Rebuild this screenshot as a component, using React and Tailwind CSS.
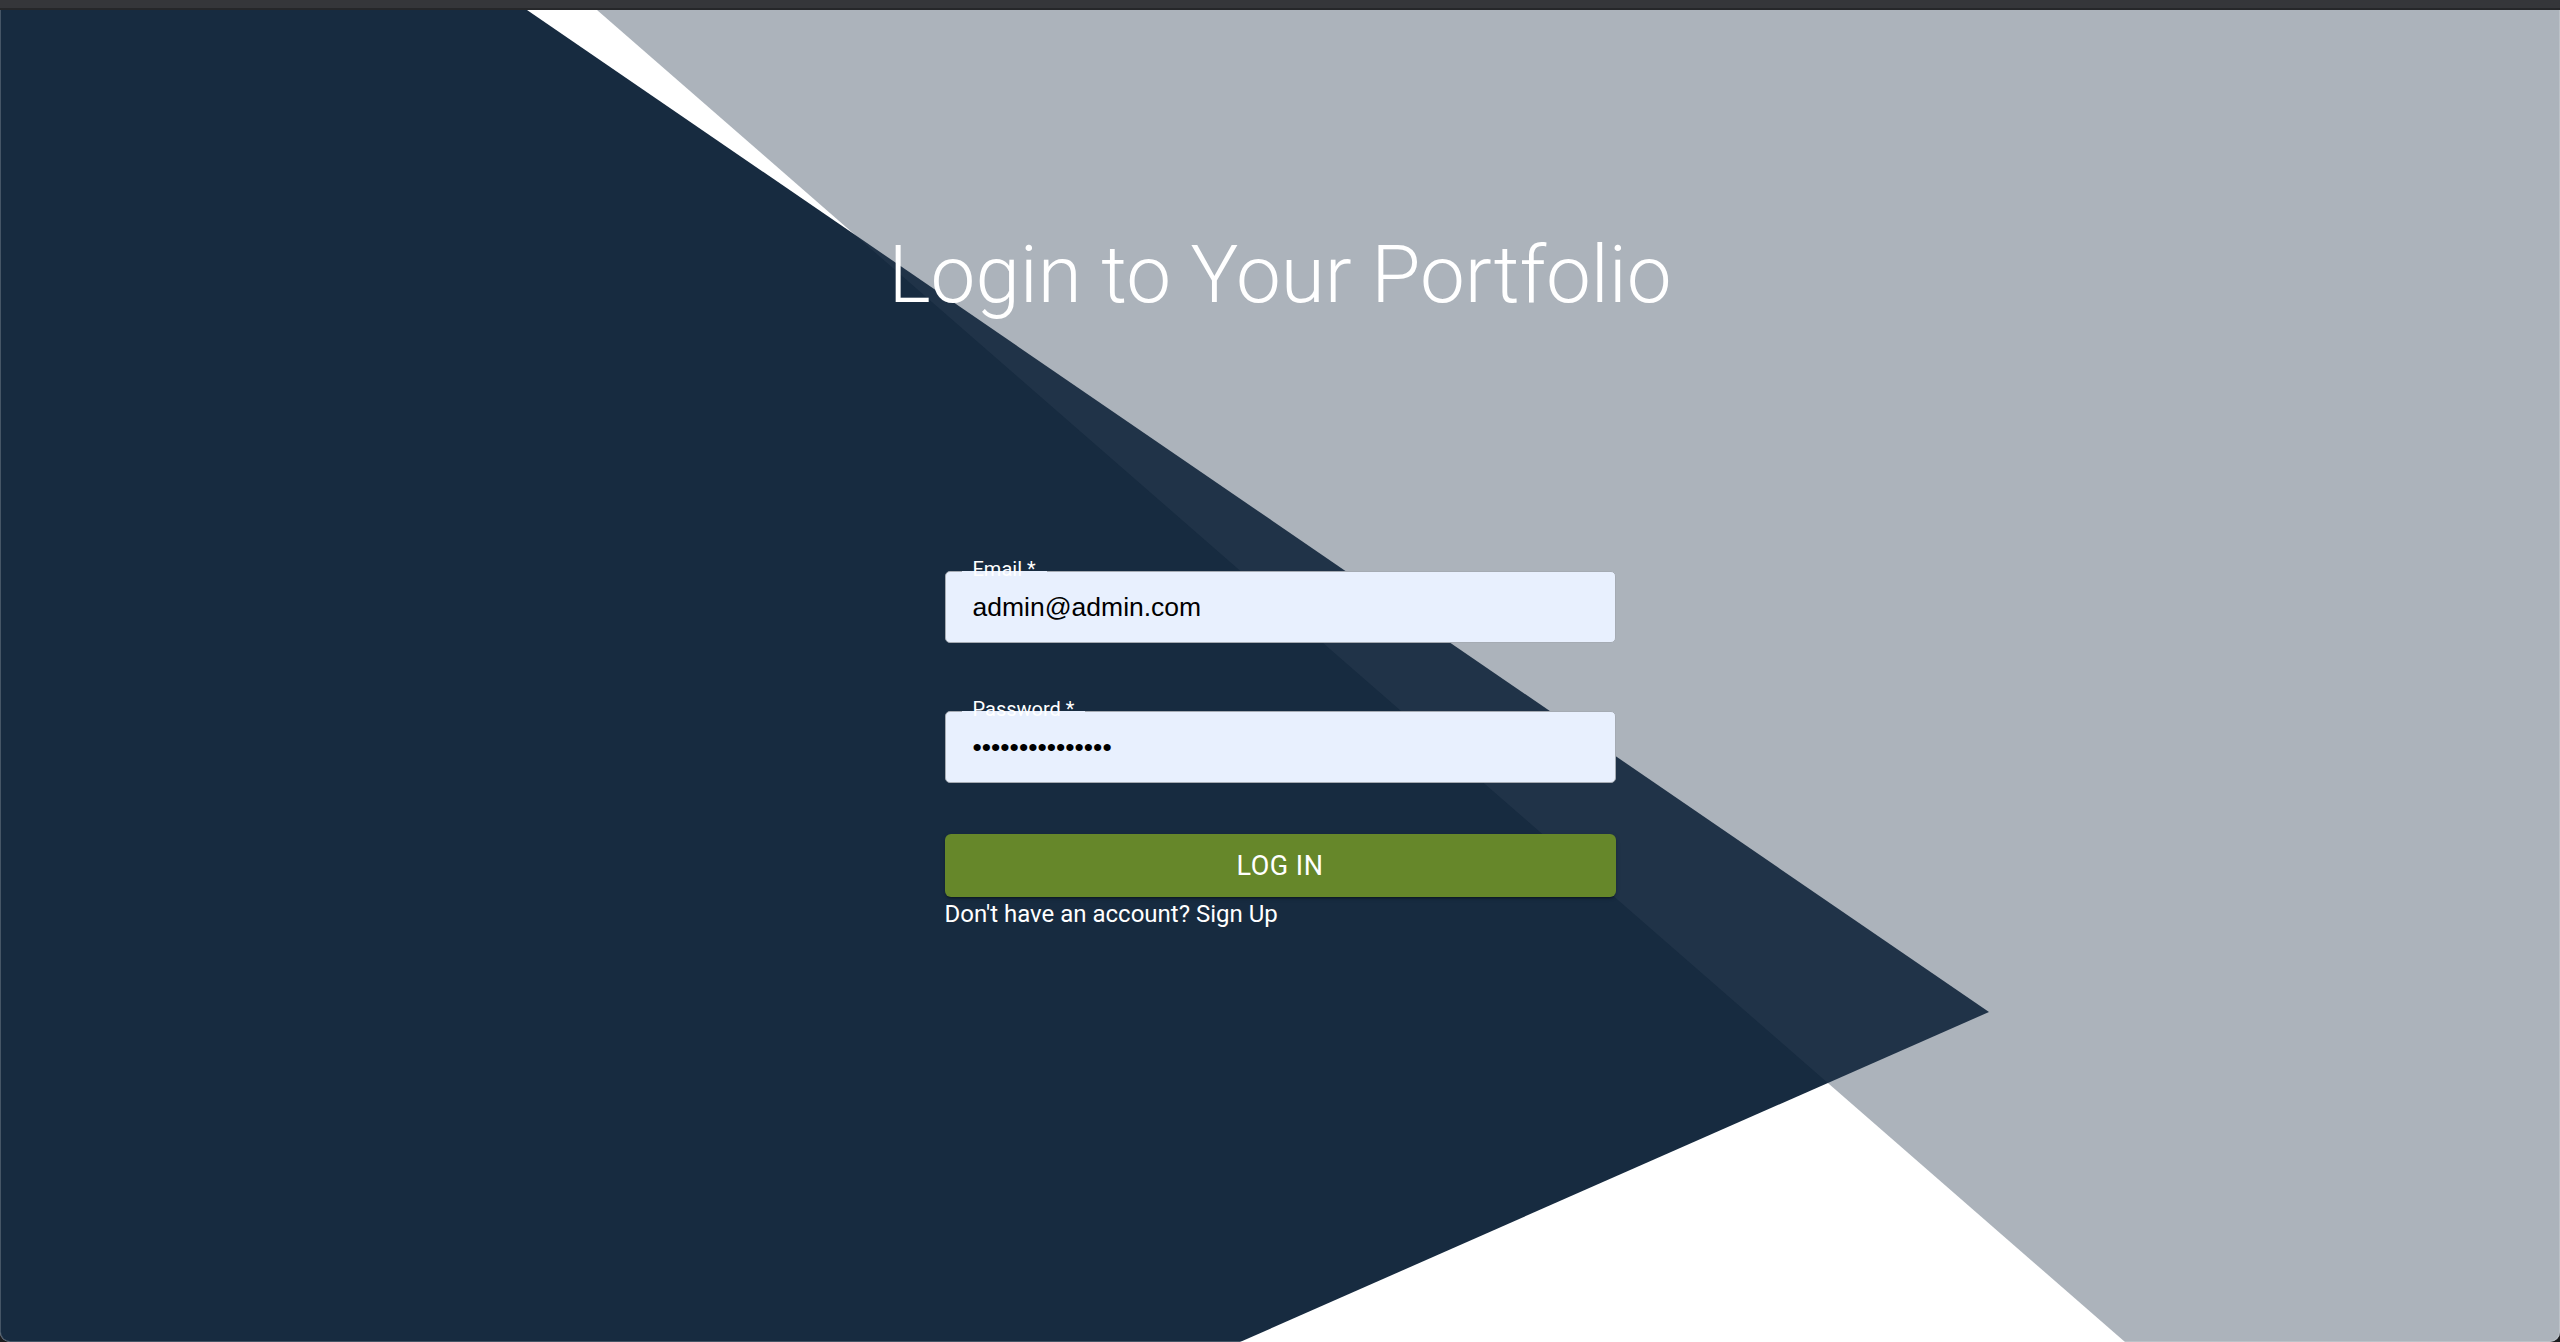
import React from "react";

function Field({ label, type, value }) {
  return (
    <div className="relative h-[72px] w-[671px] rounded-[5px] border border-[#a5abb3] bg-[#e8f0fe]">
      <div className="absolute left-[16px] top-[-13px] px-[11px] text-[20px] leading-[20px] text-white font-['Roboto',sans-serif]">
        <div className="absolute left-0 right-0 top-[12px] h-[3px] bg-[#e8f0fe]" />
        <span className="relative">{label}</span>
      </div>
      <input
        type={type}
        defaultValue={value}
        readOnly
        className="h-full w-full rounded-[5px] bg-transparent pl-[27px] text-[26.5px] text-black outline-none font-['Liberation_Sans',Arial,sans-serif]"
      />
    </div>
  );
}

export default function App() {
  return (
    <div className="flex h-[1342px] w-[2560px] flex-col overflow-hidden bg-[#1c1d20]">
      <div className="h-[8px] bg-[#35363a]" />
      <div className="h-[2px] bg-[#26272a]" />
      <div className="relative flex-1 overflow-hidden rounded-b-[10px] bg-white">
        <svg
          className="absolute inset-0 h-full w-full"
          viewBox="0 0 2560 1332"
          preserveAspectRatio="none"
        >
          <polygon points="0,0 527,0 1989,1002 1240,1332 0,1332" fill="#172b40" />
          <polygon points="597,0 2560,0 2560,1332 2125,1332" fill="rgba(48,66,84,0.4)" />
        </svg>

        <div className="relative flex flex-col items-center pt-[217px]">
          <h1 className="text-[80px] font-light leading-[96px] text-white font-['Roboto',sans-serif]">
            Login to Your Portfolio
          </h1>

          <div className="mt-[248px] flex w-[671px] flex-col">
            <Field label="Email *" type="email" value="admin@admin.com" />
            <div className="mt-[68px]">
              <Field label="Password *" type="password" value="adminpassword12" />
            </div>
            <button className="mt-[51px] h-[63px] w-full rounded-[6px] bg-[#66872a] pt-[2px] text-[27px] font-normal uppercase tracking-[0.5px] text-white shadow-[0_3px_1px_-2px_rgba(0,0,0,0.2),0_2px_2px_0_rgba(0,0,0,0.14),0_1px_5px_0_rgba(0,0,0,0.12)] font-['Roboto',sans-serif]">
              Log In
            </button>
            <p className="text-[24px] leading-[35px] text-white font-['Roboto',sans-serif]">
              Don't have an account? Sign Up
            </p>
          </div>
        </div>

        <div className="pointer-events-none absolute inset-0 rounded-b-[10px] border-x border-b border-white/20" />
      </div>
    </div>
  );
}
